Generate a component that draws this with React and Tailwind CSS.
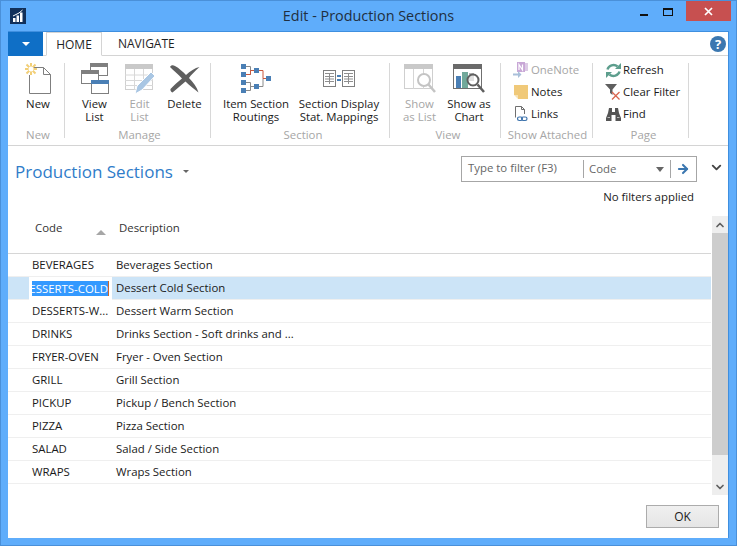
import { ChevronDown, ChevronUp, ArrowRight } from "lucide-react";

const rows = [
  ["BEVERAGES", "Beverages Section"],
  ["DESSERTS-COLD", "Dessert Cold Section"],
  ["DESSERTS-W...", "Dessert Warm Section"],
  ["DRINKS", "Drinks Section - Soft drinks and ..."],
  ["FRYER-OVEN", "Fryer - Oven Section"],
  ["GRILL", "Grill Section"],
  ["PICKUP", "Pickup / Bench Section"],
  ["PIZZA", "Pizza Section"],
  ["SALAD", "Salad / Side Section"],
  ["WRAPS", "Wraps Section"],
];

function AppLogo() {
  return (
    <svg width="16" height="16" viewBox="0 0 16 16">
      <rect width="16" height="16" fill="#11305a" />
      <path d="M3 14V10H5.500V14ZM6.500 14V7.500H9V14ZM10 14V4.500H12.500V14Z" fill="#fff" />
      <path d="M3 8L9 5L12.500 2" stroke="#fff" fill="none" />
    </svg>
  );
}

function NewIcon() {
  return (
    <svg width="28" height="31" viewBox="0 0 28 31" fill="none">
      <path d="M7.500 4.500H19.500L26.500 11.500V30.500H5.500V12" stroke="#7f7f7f" />
      <path d="M19.500 4.500V11.500H26.500" stroke="#7f7f7f" />
      <path d="M7 0V12M1 6H13M2.500 1.500L11.500 10.500M11.500 1.500L2.500 10.500" stroke="#f2cf78" strokeWidth="2" />
      <circle cx="7" cy="6" r="2.500" fill="#fff" />
    </svg>
  );
}

function ViewListIcon() {
  return (
    <svg width="28" height="31" viewBox="0 0 28 31" fill="none">
      <rect x="9.500" y="0.500" width="17" height="12" fill="#fff" stroke="#7f7f7f" />
      <rect x="9" y="0" width="18" height="4" fill="#7f7f7f" />
      <rect x="0.500" y="7.500" width="17" height="13" fill="#fff" stroke="#7f7f7f" />
      <rect x="0" y="7" width="18" height="4" fill="#7f7f7f" />
      <rect x="10.500" y="17.500" width="17" height="13" fill="#fff" stroke="#7f7f7f" />
      <rect x="10" y="17" width="18" height="4" fill="#4a7fb5" />
    </svg>
  );
}

function EditListIcon() {
  return (
    <svg width="30" height="30" viewBox="0 0 30 30" fill="none">
      <rect x="0.500" y="0.500" width="27" height="25" fill="#fff" stroke="#d0d0d0" />
      <rect x="0" y="0" width="28" height="5" fill="#c9c9c9" />
      <path d="M0 11H28M0 16.500H28M0 21.500H28M9.500 5V26M18.500 5V26" stroke="#d8d8d8" />
      <path d="M10 30L12 22L26 8L30 12L17 26Z" fill="#a9c6e3" stroke="#fff" />
    </svg>
  );
}

function DeleteIcon() {
  return (
    <svg width="30" height="28" viewBox="0 0 30 28">
      <path d="M0 2C1 0 3 0 5 1C9 3 13 7 16 10C20 6 25 3 29.500 2C25 6 21 10 19 13C23 17 27 22 28.500 27.500C24 24 19 20 15.500 16.500C11 20 7 24 2.500 27.500C1 27 0 25 0.500 24C4 20 8 17 12 13.500C8 9 3 5 0 2Z" fill="#5f5f5f" />
    </svg>
  );
}

function RoutingsIcon() {
  return (
    <svg width="30" height="29" viewBox="0 0 30 29" fill="none">
      <path d="M5 2.500H9.500V10.500H5M18 22.500H22V14.500M5 18.500H9.500V26.500H5M9.500 22.500H13" stroke="#8a8a8a" />
      <path d="M5 10.500H9.500V6.500H13M18 6.500H22V14.500H25" stroke="#c9573c" />
      {[[0, 0], [0, 8], [0, 16], [0, 24], [13, 4], [13, 20], [25, 12]].map(([x, y]) => (
        <rect key={`${x}-${y}`} x={x} y={y} width="5" height="5" fill="#4a7fb5" />
      ))}
    </svg>
  );
}

function MappingsIcon() {
  const page = (x) => (
    <g key={x}>
      <rect x={x + 0.5} y="0.500" width="12" height="16" fill="#fff" stroke="#7f7f7f" />
      <path d={`M${x + 2} 3.500H${x + 11}M${x + 6.5} 3.500V14M${x + 2} 6.500H${x + 6}M${x + 2} 9H${x + 6}M${x + 2} 11.500H${x + 6}M${x + 7} 6.500H${x + 11}M${x + 7} 9H${x + 11}M${x + 7} 11.500H${x + 11}`} stroke="#8f8f8f" />
    </g>
  );
  return (
    <svg width="32" height="17" viewBox="0 0 32 17" fill="none">
      {page(0)}
      {page(19)}
      <rect x="14" y="5" width="4" height="2" fill="#4a7fb5" />
      <rect x="14" y="9" width="4" height="2" fill="#4a7fb5" />
    </svg>
  );
}

function ShowListIcon() {
  return (
    <svg width="32" height="29" viewBox="0 0 32 29" fill="none">
      <rect x="0.500" y="0.500" width="28" height="24" fill="#fff" stroke="#cfcfcf" />
      <rect x="0" y="0" width="29" height="5" fill="#c9c9c9" />
      <path d="M9.500 5V25M19.500 5V25" stroke="#d5d5d5" />
      <circle cx="20" cy="16" r="6" fill="#fff" stroke="#c4c4c4" strokeWidth="2" />
      <path d="M24.500 20.500L31 28" stroke="#c4c4c4" strokeWidth="2.500" />
    </svg>
  );
}

function ShowChartIcon() {
  return (
    <svg width="32" height="29" viewBox="0 0 32 29" fill="none">
      <rect x="0.500" y="0.500" width="28" height="24" fill="#fff" stroke="#6f6f6f" />
      <rect x="0" y="0" width="29" height="5" fill="#6a6a6a" />
      <rect x="3" y="12" width="5" height="12" fill="#4a7fb5" />
      <rect x="9" y="8" width="6" height="16" fill="#72a99b" />
      <rect x="16" y="9" width="5" height="8" fill="#b5b5b5" />
      <circle cx="20" cy="16" r="5.500" fill="#fff" fillOpacity="0.6" stroke="#5f5f5f" strokeWidth="2" />
      <path d="M24.500 20.500L31 28" stroke="#5f5f5f" strokeWidth="2.500" />
    </svg>
  );
}

function OneNoteIcon() {
  return (
    <svg width="16" height="16" viewBox="0 0 16 16">
      <rect x="4" y="0" width="8" height="10" fill="#c8a7d6" />
      <rect x="12" y="1" width="3" height="8" fill="#dccae5" />
      <path d="M6 8V2.500L9.500 8V2.500" stroke="#fff" strokeWidth="1.200" fill="none" />
      <path d="M0 11.500H5V9L8.500 12.500L5 16V13.500H0Z" fill="#a9c0da" />
    </svg>
  );
}

function NotesIcon() {
  return (
    <svg width="14" height="14" viewBox="0 0 14 14">
      <path d="M0 0H14V14H4V10H0Z" fill="#f0c979" />
      <path d="M0 10H4V14Z" fill="#f7e3b6" />
    </svg>
  );
}

function LinksIcon() {
  return (
    <svg width="13" height="16" viewBox="0 0 13 16" fill="none">
      <path d="M0.500 11.500V0.500H6.500L9.500 3.500V8M6.500 0.500V3.500H9.500" stroke="#6f6f6f" />
      <rect x="2.500" y="11" width="5" height="3.500" rx="1.700" stroke="#3f74ad" strokeWidth="1.200" />
      <rect x="6.500" y="11" width="5.500" height="3.500" rx="1.700" stroke="#3f74ad" strokeWidth="1.200" />
    </svg>
  );
}

function RefreshIcon() {
  return (
    <svg width="15" height="15" viewBox="0 0 15 15" fill="none">
      <path d="M1.500 6.500C2.500 2.500 8 0.500 11.500 3.500" stroke="#5d9e8d" strokeWidth="2.400" />
      <path d="M9 6H15V0Z" fill="#5d9e8d" />
      <path d="M13.500 8.500C12.500 12.500 7 14.500 3.500 11.500" stroke="#5d9e8d" strokeWidth="2.400" />
      <path d="M6 9H0V15Z" fill="#5d9e8d" />
    </svg>
  );
}

function ClearFilterIcon() {
  return (
    <svg width="16" height="16" viewBox="0 0 16 16" fill="none">
      <path d="M0 0H12L7.500 5.500V11L5 9V5.500Z" fill="#5f5f5f" />
      <path d="M7 8L14.500 15.500M14.500 8L7 15.500" stroke="#d9644e" strokeWidth="1.300" />
    </svg>
  );
}

function FindIcon() {
  return (
    <svg width="15" height="13" viewBox="0 0 15 13">
      <path d="M3 0H6V4H9V0H12L13 5L15 10V13H9.500V7H5.500V13H0V10L2 5Z" fill="#555" />
      <path d="M1.500 9.500H4M11 9.500H13.500" stroke="#bbb" />
    </svg>
  );
}

function RibbonButton({ icon, label, disabled, className }) {
  return (
    <div className={`flex flex-col items-center leading-[13px] text-center ${disabled ? "text-[#a6a6a6]" : "text-[#1a1a1a]"} ${className}`}>
      <div className="flex items-center justify-center h-[31px]">{icon}</div>
      <div className="mt-[3px] whitespace-pre">{label}</div>
    </div>
  );
}

function SmallAction({ icon, label, disabled }) {
  return (
    <div className={`flex items-center h-[22px] ${disabled ? "text-[#a6a6a6]" : "text-[#1a1a1a]"}`}>
      <div className="w-[18px] flex justify-center shrink-0 mr-[1px]">{icon}</div>
      <span className="whitespace-nowrap">{label}</span>
    </div>
  );
}

function Group({ title, width, titleClass, children }) {
  return (
    <div className={`flex flex-col h-[75px] mt-[7px] border-r border-[#d8d8d8] ${width}`}>
      <div className="flex-1 min-h-0">{children}</div>
      <div className={`text-center text-[#a6a6a6] leading-[16px] whitespace-nowrap -mb-[5px] ${titleClass}`}>{title}</div>
    </div>
  );
}

export default function App() {
  return (
    <div
      className="w-[737px] h-[546px] bg-[#5fadfb] border border-[#4a90d9] pl-[7px] pr-[6px] flex flex-col text-[11.4px] overflow-hidden"
      style={{ fontFamily: '"Open Sans", "Noto Sans", sans-serif' }}
    >
      {/* Title bar */}
      <div className="h-[30px] shrink-0 flex items-center">
        <div className="ml-[2px] shrink-0">
          <AppLogo />
        </div>
        <div className="flex-1 text-center text-[14.4px] text-[#1f2f40] pl-[71px] leading-[30px]">Edit - Production Sections</div>
        <div className="flex items-start self-start -mr-[1px]">
          <div className="w-[8px] h-[2px] bg-[#111] mt-[13px] mr-[15px]" />
          <div className="w-[10px] h-[8px] border border-[#111] border-t-2 mt-[7px] mr-[13px]" />
          <div className="w-[45px] h-[20px] bg-[#c75050] flex items-center justify-center">
            <svg width="9" height="9" viewBox="0 0 9 9">
              <path d="M1 1L8 8M8 1L1 8" stroke="#fff" strokeWidth="1.700" />
            </svg>
          </div>
        </div>
      </div>

      {/* Body */}
      <div className="w-[721px] h-[507px] bg-white flex flex-col border-t border-r border-[#3f8fdf] shrink-0">
        {/* Tabs */}
        <div className="h-[24px] flex items-end border-b border-[#d4d4d4] shrink-0 relative text-[12px]">
          <div className="w-[35px] h-[24px] bg-[#0f6fc6] flex items-center justify-center -mb-[1px] self-start">
            <div className="w-0 h-0 border-x-[4px] border-x-transparent border-t-[4px] border-t-white" />
          </div>
          <div className="ml-[3px] h-[24px] w-[56px] border border-[#d4d4d4] border-b-white -mb-[1px] text-center leading-[23px] text-[#1f1f1f]">HOME</div>
          <div className="ml-[16px] h-[23px] leading-[23px] text-[#1f1f1f]">NAVIGATE</div>
          <div className="absolute right-[2px] top-[4px] w-[16px] h-[16px] rounded-full bg-[#3b77b0] text-white text-[13px] font-bold flex items-center justify-center leading-none">?</div>
        </div>

        {/* Ribbon */}
        <div className="h-[90px] shrink-0 flex border-b border-[#d4d4d4]">
          <Group title="New" width="w-[57px]" titleClass="pl-[4px]">
            <RibbonButton className="ml-[2px] w-[56px]" icon={<NewIcon />} label="New" />
          </Group>
          <Group title="Manage" width="w-[146px]" titleClass="pl-[4px]">
            <div className="flex pl-[7px]">
              <RibbonButton className="w-[45px]" icon={<ViewListIcon />} label={"View\nList"} />
              <RibbonButton className="w-[45px]" disabled icon={<EditListIcon />} label={"Edit\nList"} />
              <RibbonButton className="w-[45px]" icon={<DeleteIcon />} label="Delete" />
            </div>
          </Group>
          <Group title="Section" width="w-[179px]" titleClass="pl-[6px]">
            <div className="flex pl-[4px]">
              <RibbonButton className="w-[82px]" icon={<RoutingsIcon />} label={"Item Section\nRoutings"} />
              <RibbonButton className="w-[84px]" icon={<MappingsIcon />} label={"Section Display\nStat. Mappings"} />
            </div>
          </Group>
          <Group title="View" width="w-[111px]" titleClass="pl-[6px]">
            <div className="flex pl-[7px]">
              <RibbonButton className="w-[45px]" disabled icon={<ShowListIcon />} label={"Show\nas List"} />
              <RibbonButton className="w-[54px]" icon={<ShowChartIcon />} label={"Show as\nChart"} />
            </div>
          </Group>
          <Group title="Show Attached" width="w-[92px]" titleClass="pl-[2px]">
            <div className="pl-[11px] -mt-[4px]">
              <SmallAction disabled icon={<OneNoteIcon />} label="OneNote" />
              <SmallAction icon={<NotesIcon />} label="Notes" />
              <SmallAction icon={<LinksIcon />} label="Links" />
            </div>
          </Group>
          <Group title="Page" width="w-[96px]" titleClass="pl-[6px]">
            <div className="pl-[11px] -mt-[4px]">
              <SmallAction icon={<RefreshIcon />} label="Refresh" />
              <SmallAction icon={<ClearFilterIcon />} label="Clear Filter" />
              <SmallAction icon={<FindIcon />} label="Find" />
            </div>
          </Group>
        </div>

        {/* Page header */}
        <div className="h-[54px] shrink-0 flex items-start relative">
          <div className="ml-[7px] mt-[14px] text-[17px] leading-[24px] text-[#2f7cc9]">Production Sections</div>
          <div className="ml-[10px] mt-[24px] w-0 h-0 border-x-[3px] border-x-transparent border-t-[3px] border-t-[#666]" />
          <div className="ml-auto mr-[31px] mt-[10px] shrink-0 w-[236px] h-[26px] border border-[#a6a6a6] flex items-center text-[#666]">
            <div className="w-[122px] shrink-0 pl-[6px] border-r border-[#a6a6a6] h-[18px] leading-[16px]">Type to filter (F3)</div>
            <div className="w-[87px] shrink-0 pl-[5px] pr-[6px] h-[18px] border-r border-[#a6a6a6] flex items-center justify-between">
              <span>Code</span>
              <div className="w-0 h-0 border-x-[4px] border-x-transparent border-t-[5px] border-t-[#666]" />
            </div>
            <ArrowRight size={14} strokeWidth={3.500} className="ml-[5px] shrink-0 text-[#3b77b0]" />
          </div>
          <ChevronDown size={15} strokeWidth={3} className="absolute right-[4px] top-[14px] text-[#444]" />
          <div className="absolute right-[34px] top-[42px] text-[#1a1a1a] leading-[17px]">No filters applied</div>
        </div>

        {/* List */}
        <div className="flex h-[295px] shrink-0">
          <div className="w-[704px]">
            <div className="h-[54px] relative border-b border-[#d6d6d6] text-[#333]">
              <span className="absolute left-[27px] top-[19px] leading-[17px]">Code</span>
              <span className="absolute left-[111px] top-[19px] leading-[17px]">Description</span>
              <div className="absolute left-[88px] top-[30px] w-0 h-0 border-x-[5px] border-x-transparent border-b-[5px] border-b-[#a6a6a6]" />
            </div>
            {rows.map(([code, desc], i) => (
              <div
                key={code}
                className={`h-[23px] flex items-center border-b border-[#efefef] text-[#1a1a1a] ${i === 1 ? "bg-[#cce4f7]" : ""}`}
              >
                {i === 1 ? (
                  <div className="ml-[21px] w-[83px] h-[23px] bg-white flex items-center pl-[3px] shrink-0">
                    <div className="w-[77px] h-[15px] overflow-hidden bg-[#3399ff] text-white flex justify-end leading-[15px] border-r border-[#c9662b]">
                      <span className="whitespace-nowrap">{code}</span>
                    </div>
                  </div>
                ) : (
                  <div className="ml-[24px] w-[80px] shrink-0 whitespace-nowrap">{code}</div>
                )}
                <div className="ml-[4px] whitespace-nowrap">{desc}</div>
              </div>
            ))}
          </div>
          {/* Scrollbar */}
          <div className="ml-[1px] mt-[16px] w-[16px] h-[279px] bg-[#eeeeee] flex flex-col">
            <div className="h-[17px] flex items-center justify-center">
              <ChevronUp size={12} strokeWidth={3.500} className="text-[#606060]" />
            </div>
            <div className="h-[222px] bg-[#cdcdcd]" />
            <div className="mt-auto h-[17px] flex items-center justify-center">
              <ChevronDown size={12} strokeWidth={3.500} className="text-[#606060]" />
            </div>
          </div>
        </div>

        {/* Footer */}
        <div className="flex-1 flex justify-end items-start pt-[10px] pr-[9px]">
          <div className="w-[73px] h-[23px] border border-[#acacac] bg-gradient-to-b from-[#f0f0f0] to-[#e5e5e5] text-center leading-[21px] text-[12px] text-[#1a1a1a]">OK</div>
        </div>
      </div>
    </div>
  );
}
